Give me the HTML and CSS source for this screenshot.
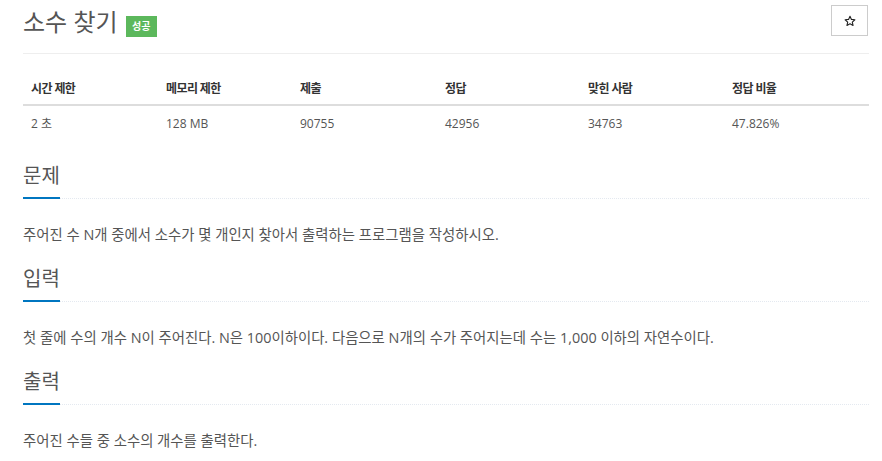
FILE: index.html
```html
<!DOCTYPE html>
<html lang="ko">
<head>
<meta charset="utf-8">
<link rel="stylesheet" href="styles.css">
</head>
<body>
<div class="page">
  <div class="title-row">
    <h1 class="title">소수 찾기 <span class="badge">성공</span></h1>
    <button class="star" type="button">
      <svg width="12" height="12" viewBox="0 0 24 24"><path d="M12 2.5l2.9 6.3 6.9.7-5.2 4.6 1.5 6.8L12 17.4l-6.1 3.5 1.5-6.8-5.2-4.6 6.9-.7z" fill="none" stroke="#222" stroke-width="2.2" stroke-linejoin="round"/></svg>
    </button>
  </div>
  <table class="info">
    <thead>
      <tr><th class="c1">시간 제한</th><th class="c2">메모리 제한</th><th class="c3">제출</th><th class="c4">정답</th><th class="c5">맞힌 사람</th><th>정답 비율</th></tr>
    </thead>
    <tbody>
      <tr><td>2 초</td><td>128 MB</td><td>90755</td><td>42956</td><td>34763</td><td>47.826%</td></tr>
    </tbody>
  </table>
  <section class="sec">
    <div class="headline"><h2>문제</h2></div>
    <p>주어진 수 N개 중에서 소수가 몇 개인지 찾아서 출력하는 프로그램을 작성하시오.</p>
  </section>
  <section class="sec">
    <div class="headline"><h2>입력</h2></div>
    <p>첫 줄에 수의 개수 N이 주어진다. N은 100이하이다. 다음으로 N개의 수가 주어지는데 수는 1,000 이하의 자연수이다.</p>
  </section>
  <section class="sec">
    <div class="headline"><h2>출력</h2></div>
    <p>주어진 수들 중 소수의 개수를 출력한다.</p>
  </section>
</div>
</body>
</html>
```
FILE: styles.css
```css
* { box-sizing: border-box; }
html, body { margin: 0; padding: 0; background: #fff; }
body {
  font-family: "Open Sans", "Noto Sans CJK KR", sans-serif;
  color: #555;
  font-size: 13px;
}
.page { padding: 0 13px 0 23px; }
.title-row {
  display: flex;
  justify-content: space-between;
  align-items: flex-start;
  border-bottom: 1px solid #eee;
  height: 54px;
  padding-top: 5px;
}
.title {
  margin: 0;
  font-size: 24px;
  font-weight: 400;
  line-height: 34px;
  color: #555;
  display: flex;
  align-items: flex-start;
  gap: 8px;
}
.badge {
  margin-top: 11px;
  background: #5cb85c;
  color: #fff;
  font-size: 10px;
  font-weight: 700;
  padding: 0 6.5px;
  line-height: 21px;
  height: 21px;
}
.star {
  width: 37px;
  height: 31px;
  border: 1px solid #ccc;
  background: #fff;
  padding: 0;
  display: flex;
  align-items: center;
  justify-content: center;
  margin-right: 1px;
}
.info {
  width: 100%;
  border-collapse: collapse;
  margin: 19px 0 26px;
}
.info th {
  text-align: left;
  font-weight: 700;
  color: #333;
  font-size: 12px;
  letter-spacing: -0.6px;
  line-height: 17px;
  padding: 7px 8px;
  border-bottom: 2px solid #ddd;
}
.info td {
  padding: 9px 8px 4px;
  font-size: 12px;
  line-height: 17px;
  color: #555;
}
.c1 { width: 135px; }
.c2 { width: 134px; }
.c3 { width: 145px; }
.c4 { width: 143px; }
.c5 { width: 144px; }
.sec + .sec { margin-top: 19px; }
.headline {
  border-bottom: 1px dotted #e4e9f0;
  margin-bottom: 25px;
}
.headline h2 {
  display: inline-block;
  margin: 0 0 -1px;
  font-size: 20px;
  font-weight: 400;
  line-height: 28px;
  padding-bottom: 7px;
  border-bottom: 2px solid #0076c0;
  color: #555;
}
.sec p { margin: 0; font-size: 14.4px; line-height: 22px; }
```
